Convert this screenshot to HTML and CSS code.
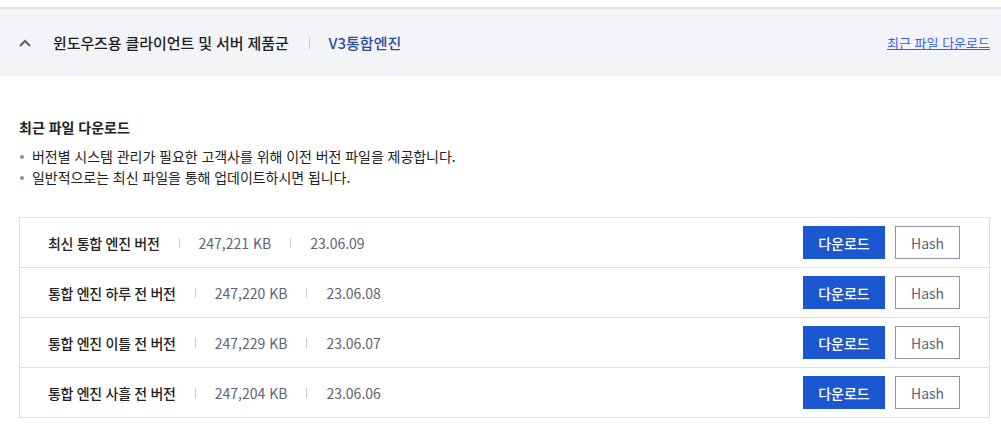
FILE: index.html
```html
<!DOCTYPE html>
<html lang="ko">
<head>
    <meta charset="UTF-8">
    <meta name="viewport" content="width=device-width, initial-scale=1.0">
    <title>최근 파일 다운로드</title>
    <link rel="stylesheet" href="styles.css">
</head>
<body>
    <div class="page">
        <div class="product-bar">
            <svg class="chevron" width="12" height="8" viewBox="0 0 12 8">
                <path d="M1 7 L6 2 L11 7" fill="none" stroke="#5b6474" stroke-width="2"/>
            </svg>
            <span class="product-title">윈도우즈용 클라이언트 및 서버 제품군</span>
            <span class="bar-divider"></span>
            <span class="product-name">V3통합엔진</span>
            <a class="recent-link" href="#">최근 파일 다운로드</a>
        </div>

        <div class="content">
            <h2>최근 파일 다운로드</h2>
            <ul class="notes">
                <li>버전별 시스템 관리가 필요한 고객사를 위해 이전 버전 파일을 제공합니다.</li>
                <li>일반적으로는 최신 파일을 통해 업데이트하시면 됩니다.</li>
            </ul>

            <div class="file-table">
                <div class="file-row">
                    <span class="file-name">최신 통합 엔진 버전</span>
                    <span class="sep"></span>
                    <span class="file-meta">247,221 KB</span>
                    <span class="sep"></span>
                    <span class="file-meta">23.06.09</span>
                    <div class="actions">
                        <button class="btn-download">다운로드</button>
                        <button class="btn-hash">Hash</button>
                    </div>
                </div>
                <div class="file-row">
                    <span class="file-name">통합 엔진 하루 전 버전</span>
                    <span class="sep"></span>
                    <span class="file-meta">247,220 KB</span>
                    <span class="sep"></span>
                    <span class="file-meta">23.06.08</span>
                    <div class="actions">
                        <button class="btn-download">다운로드</button>
                        <button class="btn-hash">Hash</button>
                    </div>
                </div>
                <div class="file-row">
                    <span class="file-name">통합 엔진 이틀 전 버전</span>
                    <span class="sep"></span>
                    <span class="file-meta">247,229 KB</span>
                    <span class="sep"></span>
                    <span class="file-meta">23.06.07</span>
                    <div class="actions">
                        <button class="btn-download">다운로드</button>
                        <button class="btn-hash">Hash</button>
                    </div>
                </div>
                <div class="file-row">
                    <span class="file-name">통합 엔진 사흘 전 버전</span>
                    <span class="sep"></span>
                    <span class="file-meta">247,204 KB</span>
                    <span class="sep"></span>
                    <span class="file-meta">23.06.06</span>
                    <div class="actions">
                        <button class="btn-download">다운로드</button>
                        <button class="btn-hash">Hash</button>
                    </div>
                </div>
            </div>
        </div>
    </div>
</body>
</html>
```

FILE: styles.css
```css
body {
    margin: 0;
    font-family: "Noto Sans CJK KR", "Noto Sans", sans-serif;
    color: #222;
    background: #fff;
}

.page {
    padding-top: 7px;
}

.product-bar {
    display: flex;
    align-items: center;
    height: 67px;
    padding: 0 11px 0 19px;
    background-color: #f3f4f8;
    border-top: 2px solid #dcdfe8;
}

.chevron {
    margin-right: 22px;
}

.product-title {
    font-size: 15px;
    font-weight: 500;
    letter-spacing: -0.1px;
    color: #222;
}

.bar-divider {
    width: 1px;
    height: 12px;
    margin: 0 19px 0 20px;
    background-color: #c5cad6;
}

.product-name {
    font-size: 15px;
    font-weight: 500;
    color: #2b4b9b;
}

.recent-link {
    margin-left: auto;
    font-size: 13px;
    color: #3b5ff0;
    text-decoration: underline;
}

.content {
    padding: 0 11px 0 19px;
}

.content h2 {
    margin: 41px 0 0;
    font-size: 14px;
    font-weight: 700;
    line-height: 20px;
}

.notes {
    margin: 9px 0 0;
    padding: 0;
    list-style: none;
}

.notes li {
    position: relative;
    padding-left: 13px;
    font-size: 14px;
    line-height: 21px;
    letter-spacing: -0.05px;
}

.notes li::before {
    content: "";
    position: absolute;
    left: 1px;
    top: 9px;
    width: 4px;
    height: 4px;
    border-radius: 50%;
    background-color: #8a93a3;
}

.file-table {
    margin-top: 29px;
    border: 1px solid #dcdfe6;
}

.file-row {
    display: flex;
    align-items: center;
    height: 49px;
    padding: 0 29px 0 28px;
}

.file-row + .file-row {
    border-top: 1px solid #dcdfe6;
}

.file-name {
    font-size: 14px;
    font-weight: 500;
    letter-spacing: -0.3px;
    color: #222;
}

.file-meta {
    font-size: 14px;
    color: #5b6577;
}

.sep {
    width: 1px;
    height: 10px;
    margin: 0 19px;
    background-color: #c8ccd6;
}

.actions {
    display: flex;
    gap: 10px;
    margin-left: auto;
}

.actions button {
    height: 33px;
    font-family: inherit;
    font-size: 14px;
    cursor: pointer;
}

.btn-download {
    width: 82px;
    border: none;
    background-color: #1b57d1;
    color: #fff;
    font-weight: 500;
}

.btn-hash {
    width: 65px;
    border: 1px solid #8a95a8;
    background-color: #fff;
    color: #5b6577;
}
```
